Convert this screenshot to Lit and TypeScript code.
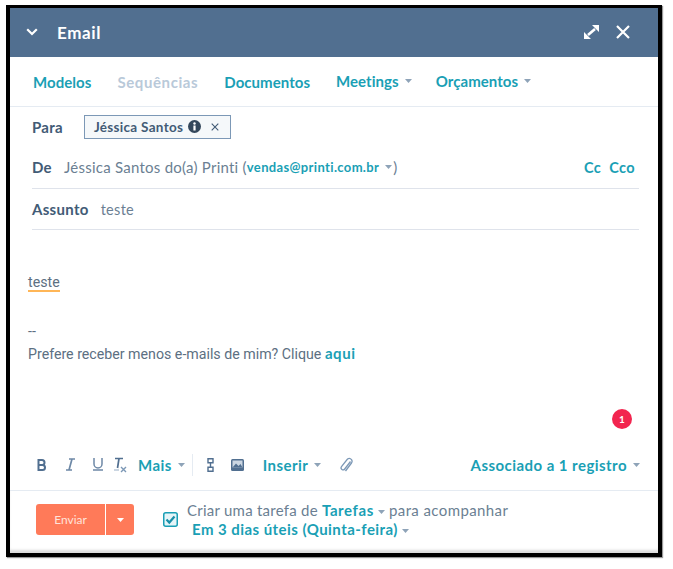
import { LitElement, html, css } from "lit";
import { customElement } from "lit/decorators.js";

const caret = html`<svg class="caret" width="7" height="4" viewBox="0 0 7 4"><path d="M0 0h7L3.5 4z" fill="currentColor"/></svg>`;

@customElement("app-root")
export class AppRoot extends LitElement {
  static styles = css`
    :host { display: block; width: 673px; height: 569px; background: #fff; font-family: Lato, "Open Sans", sans-serif; color: #33475b; overflow: hidden; }
    .page { padding: 5px 0 0 6px; }
    .frame { box-sizing: border-box; width: 656px; height: 552px; border: solid #000; border-width: 3px 4px 4px 4px; background: #fff; display: flex; flex-direction: column; box-shadow: 1px 1px 1px #999; }
    .head { height: 49px; flex: none; box-sizing: border-box; background: #516f90; color: #fff; display: flex; align-items: center; padding: 0 28px 1px 16px; font-weight: 700; font-size: 17px; }
    .head .title { margin-left: 19px; flex: 1; letter-spacing: .6px; }
    .head svg { display: block; }
    .head .close { margin-left: 17px; }
    .tabs { height: 50px; flex: none; box-sizing: border-box; border-bottom: 1px solid #e5ebf2; display: flex; align-items: center; padding: 0 0 0 23px; font-weight: 700; font-size: 15px; color: #1a9fb5; letter-spacing: .05px; }
    .tabs span { display: inline-flex; align-items: center; gap: 6px; }
    .tabs .t1 { margin-right: 26px; padding-top: 1px; }
    .tabs .t2 { margin-right: 26px; color: #b9c9d9; padding-top: 1px; letter-spacing: .6px; }
    .tabs .t3 { margin-right: 26px; padding-top: 1px; }
    .tabs .t4 { margin-right: 24px; margin-bottom: 1px; }
    .tabs .t5 { margin-bottom: 1px; }
    .caret { flex: none; color: #8ea3b8; }
    .fields { padding: 0 19px 0 22px; flex: none; font-size: 15px; }
    .label { font-weight: 700; color: #425b76; letter-spacing: .3px; }
    .para { height: 39px; display: flex; align-items: center; }
    .pill { margin-left: 21px; height: 24px; box-sizing: border-box; width: 147px; border: 1px solid #7c98b6; background: #f5f8fa; display: flex; align-items: center; padding-left: 9px; font-weight: 700; font-size: 13.5px; letter-spacing: .3px; color: #425b76; white-space: nowrap; }
    .pill svg { margin-left: 5px; flex: none; }
    .pill .x { margin-left: 10px; }
    .de { height: 43px; box-sizing: border-box; display: flex; align-items: center; border-bottom: 1px solid #dfe3eb; }
    .de .sender { margin-left: 12px; color: #6b7f93; font-size: 15px; letter-spacing: .25px; flex: 1; display: flex; align-items: center; white-space: pre; }
    .mail { color: #1a9fb5; font-weight: 700; font-size: 13px; letter-spacing: .35px; }
    .sender .caret { margin: 0 1px 0 6px; }
    .cc { color: #1a9fb5; font-weight: 700; font-size: 14.5px; letter-spacing: .4px; margin-right: 4px; display: flex; gap: 8px; }
    .as { height: 41px; box-sizing: border-box; display: flex; align-items: center; border-bottom: 1px solid #dfe3eb; }
    .as .v { margin-left: 12px; color: #6b7f93; font-size: 14.5px; letter-spacing: .3px; }
    .body { flex: 1; position: relative; padding: 44px 0 0 18px; font-family: Roboto, sans-serif; font-size: 14.2px; color: #5c6f82; }
    .teste { display: inline-block; line-height: 15px; border-bottom: 2px solid #ffb657; }
    .dash { margin-top: 29px; line-height: 21px; }
    .line { line-height: 22px; }
    .line b { font-family: Lato, sans-serif; font-size: 15px; color: #1a9fb5; font-weight: 700; letter-spacing: .6px; }
    .badge { position: absolute; left: 602px; top: 179px; width: 20px; height: 20px; border-radius: 50%; background: #f2254f; color: #fff; font: 700 10px/20px Lato, sans-serif; text-align: center; }
    .tools { height: 50px; flex: none; box-sizing: border-box; border-bottom: 1px solid #e5ebf2; display: flex; align-items: center; padding: 0 18px 2px 27px; color: #516f90; font-weight: 700; font-size: 15px; }
    .tools svg { display: block; flex: none; }
    .link { color: #1a9fb5; display: inline-flex; align-items: center; gap: 6px; letter-spacing: .45px; white-space: nowrap; }
    .sep { width: 1px; height: 22px; background: #e5ebf2; margin: 0 14px 0 7px; }
    .spring { flex: 1; }
    .foot { height: 62px; flex: none; box-sizing: border-box; display: flex; align-items: flex-start; padding: 13px 0 0 26px; box-shadow: inset 0 -4px 3px -1px #ddd; }
    .send { width: 98px; height: 31px; display: flex; background: #ff7a59; border-radius: 3px; color: #ffe3da; font-size: 12px; flex: none; }
    .send .a { width: 69px; border-right: 1px solid #fff; display: flex; align-items: center; justify-content: center; }
    .send .b { flex: 1; display: flex; align-items: center; justify-content: center; }
    .send .caret { color: #fff; }
    .check { margin: 8px 9px 0 29px; flex: none; display: block; }
    .task { font-size: 15px; color: #6b7f93; line-height: 20px; margin-top: -4px; letter-spacing: .25px; white-space: nowrap; }
    .task b { color: #1a9fb5; letter-spacing: .6px; }
    .task .after { letter-spacing: .4px; }
    .task .caret { margin: 0 4px 2px 4px; }
    .task .l2 { padding-left: 5px; margin-top: -1px; }
    .task .l2 b { letter-spacing: .45px; }
  `;

  render() {
    return html`<div class="page"><div class="frame">
      <div class="head">
        <svg width="12" height="8" viewBox="0 0 12 8"><path d="M1.200 1.200 6 6l4.800-4.800" fill="none" stroke="#fff" stroke-width="2.200"/></svg>
        <span class="title">Email</span>
        <svg width="15" height="14" viewBox="0 0 15 14"><path d="M8 0h7v7zM0 7v7h7z" fill="#fff"/><path d="M4 10l7-6" stroke="#fff" stroke-width="2.600"/></svg>
        <svg class="close" width="14" height="14" viewBox="0 0 14 14"><path d="M1 1l12 12M13 1L1 13" stroke="#fff" stroke-width="2.200"/></svg>
      </div>
      <div class="tabs">
        <span class="t1">Modelos</span><span class="t2">Sequências</span><span class="t3">Documentos</span>
        <span class="t4">Meetings ${caret}</span><span class="t5">Orçamentos ${caret}</span>
      </div>
      <div class="fields">
        <div class="para"><span class="label">Para</span>
          <div class="pill">Jéssica Santos
            <svg width="13" height="13" viewBox="0 0 13 13"><circle cx="6.500" cy="6.500" r="6.500" fill="#33475b"/><rect x="5.400" y="5.500" width="2.200" height="5" fill="#fff"/><circle cx="6.500" cy="3.500" r="1.200" fill="#fff"/></svg>
            <svg class="x" width="8" height="8" viewBox="0 0 8 8"><path d="M.7.7l6.600 6.600M7.300.7L.7 7.300" stroke="#425b76" stroke-width="1.100"/></svg>
          </div>
        </div>
        <div class="de"><span class="label">De</span>
          <span class="sender">Jéssica Santos do(a) Printi (<span class="mail">vendas@printi.com.br</span>${caret})</span>
          <span class="cc"><span>Cc</span><span>Cco</span></span>
        </div>
        <div class="as"><span class="label">Assunto</span><span class="v">teste</span></div>
      </div>
      <div class="body">
        <span class="teste">teste</span>
        <div class="dash">--</div>
        <div class="line">Prefere receber menos e-mails de mim? Clique <b>aqui</b></div>
        <div class="badge">1</div>
      </div>
      <div class="tools">
        <svg width="10" height="12" viewBox="0 0 10 12"><path d="M1.500 1h3.500a2.500 2.500 0 0 1 0 5H1.500zM1.500 6h4a2.500 2.500 0 0 1 0 5h-4z" fill="none" stroke="#516f90" stroke-width="2"/></svg>
        <svg style="margin-left:19px" width="9" height="13" viewBox="0 0 9 13"><path d="M3 1h6M0 12h6M6 1 3 12" stroke="#6d88a6" stroke-width="1.700" fill="none"/></svg>
        <svg style="margin-left:18px" width="10" height="13" viewBox="0 0 10 13"><path d="M1 0v6a4 4 0 0 0 8 0V0M0 12h10" stroke="#6d88a6" stroke-width="1.500" fill="none"/></svg>
        <svg style="margin-left:11px" width="13" height="16" viewBox="0 0 13 16"><path d="M1 1.500h8M5 1.500 3.500 11" stroke="#516f90" stroke-width="1.700" fill="none"/><path d="M7 10l5 5M12 10l-5 5" stroke="#7c98b6" stroke-width="1.400"/><path d="M0 13h5" stroke="#cbd6e2" stroke-width="2"/></svg>
        <span class="link" style="margin-left:11px">Mais ${caret}</span>
        <span class="sep"></span>
        <svg width="7" height="14" viewBox="0 0 7 14"><path d="M1 .8h5v4H1zM1 9.200h5v4H1zM3.500 4.800v4.400" stroke="#516f90" stroke-width="1.400" fill="none"/></svg>
        <svg style="margin-left:17px" width="13" height="12" viewBox="0 0 13 12"><rect width="13" height="12" rx="1.500" fill="#516f90"/><rect x="1.500" y="1.500" width="10" height="7" fill="#cbd6e2"/><path d="M1.500 8.500 5 4.500l2.500 2.500L9.500 5l2 3.500z" fill="#516f90"/></svg>
        <span class="link" style="margin-left:19px">Inserir ${caret}</span>
        <svg style="margin-left:19px" width="13" height="16" viewBox="0 0 13 16"><path d="M11 4.500 5.200 12a2 2 0 0 1-3.200-2.400L8 2a3 3 0 0 1 4 .6 3 3 0 0 1 0 3.400L6 14" transform="translate(-.5 0)" stroke="#7c98b6" stroke-width="1.300" fill="none"/></svg>
        <span class="spring"></span>
        <span class="link">Associado a 1 registro ${caret}</span>
      </div>
      <div class="foot">
        <div class="send"><div class="a">Enviar</div><div class="b">${caret}</div></div>
        <svg class="check" width="15" height="15" viewBox="0 0 15 15"><rect x=".75" y=".75" width="13.500" height="13.500" rx="2" fill="#e5f5f8" stroke="#1a9fb5" stroke-width="1.500"/><path d="M3.500 7.500 6.300 10.500 11.500 4.500" fill="none" stroke="#1a8fa8" stroke-width="2.200"/></svg>
        <div class="task">
          <div>Criar uma tarefa de <b>Tarefas</b>${caret}<span class="after">para acompanhar</span></div>
          <div class="l2"><b>Em 3 dias úteis (Quinta-feira)</b>${caret}</div>
        </div>
      </div>
    </div></div>`;
  }
}
